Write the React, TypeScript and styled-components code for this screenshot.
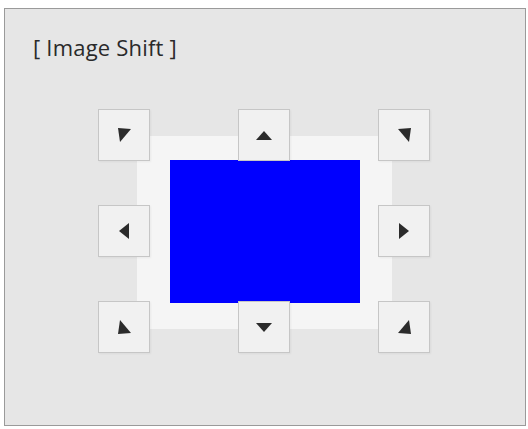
import { createGlobalStyle, styled } from "styled-components";

const GlobalStyle = createGlobalStyle`
  html, body {
    margin: 0;
    padding: 0;
    background: #ffffff;
  }
`;

type Dir = "ul" | "u" | "ur" | "l" | "r" | "dl" | "d" | "dr";

const shapes: Record<Dir, string> = {
  ul: "0,0 13,1 2,14",
  u: "0,9 8,0 16,9",
  ur: "0,1 13,0 11,14",
  l: "10,0 10,16 0,8",
  r: "0,0 10,8 0,16",
  dl: "2,0 13,13 0,14",
  d: "0,0 16,0 8,9",
  dr: "11,0 13,14 0,13",
};

const sizes: Record<Dir, [number, number]> = {
  ul: [13, 14],
  u: [16, 9],
  ur: [13, 14],
  l: [10, 16],
  r: [10, 16],
  dl: [13, 14],
  d: [16, 9],
  dr: [13, 14],
};

const Frame = styled.div`
  box-sizing: border-box;
  margin: 8px 0 0 4px;
  width: 522px;
  height: 418px;
  border: 1px solid #9a9a9a;
  background: #e6e6e6;
  padding: 23px 0 0 28px;
  font-family: "Open Sans", "DejaVu Sans", sans-serif;
`;

const Title = styled.div`
  font-size: 22px;
  line-height: 30px;
  color: #2a2a2a;
  letter-spacing: 0.2px;
`;

const Pad = styled.div`
  display: grid;
  grid-template-columns: repeat(3, 52px);
  grid-template-rows: repeat(3, 52px);
  column-gap: 88px;
  row-gap: 44px;
  margin: 47px 0 0 65px;
  width: max-content;
`;

const Preview = styled.div`
  grid-column: 1 / -1;
  grid-row: 1 / -1;
  margin: 27px 38px 24px 39px;
  padding: 24px 32px 26px 33px;
  background: #f5f5f5;
  display: flex;
`;

const Image = styled.div`
  flex: 1;
  background: #0000ff;
`;

const ArrowButton = styled.button<{ $col: number; $row: number }>`
  grid-column: ${(p) => p.$col};
  grid-row: ${(p) => p.$row};
  z-index: 1;
  box-sizing: border-box;
  width: 52px;
  height: 52px;
  padding: 0;
  border: 1px solid #c6c6c6;
  background: #f1f1f1;
  display: flex;
  align-items: center;
  justify-content: center;
  cursor: pointer;
  box-shadow: 1px 1px 2px rgba(0, 0, 0, 0.05);
`;

const buttons: { dir: Dir; col: number; row: number }[] = [
  { dir: "ul", col: 1, row: 1 },
  { dir: "u", col: 2, row: 1 },
  { dir: "ur", col: 3, row: 1 },
  { dir: "l", col: 1, row: 2 },
  { dir: "r", col: 3, row: 2 },
  { dir: "dl", col: 1, row: 3 },
  { dir: "d", col: 2, row: 3 },
  { dir: "dr", col: 3, row: 3 },
];

function Arrow({ dir }: { dir: Dir }) {
  const [w, h] = sizes[dir];
  return (
    <svg width={w} height={h} viewBox={`0 0 ${w} ${h}`}>
      <polygon points={shapes[dir]} fill="#2b2b2b" />
    </svg>
  );
}

export default function App() {
  return (
    <>
      <GlobalStyle />
      <Frame>
        <Title>[ Image Shift ]</Title>
        <Pad>
          <Preview>
            <Image />
          </Preview>
          {buttons.map((b) => (
            <ArrowButton key={b.dir} $col={b.col} $row={b.row}>
              <Arrow dir={b.dir} />
            </ArrowButton>
          ))}
        </Pad>
      </Frame>
    </>
  );
}
